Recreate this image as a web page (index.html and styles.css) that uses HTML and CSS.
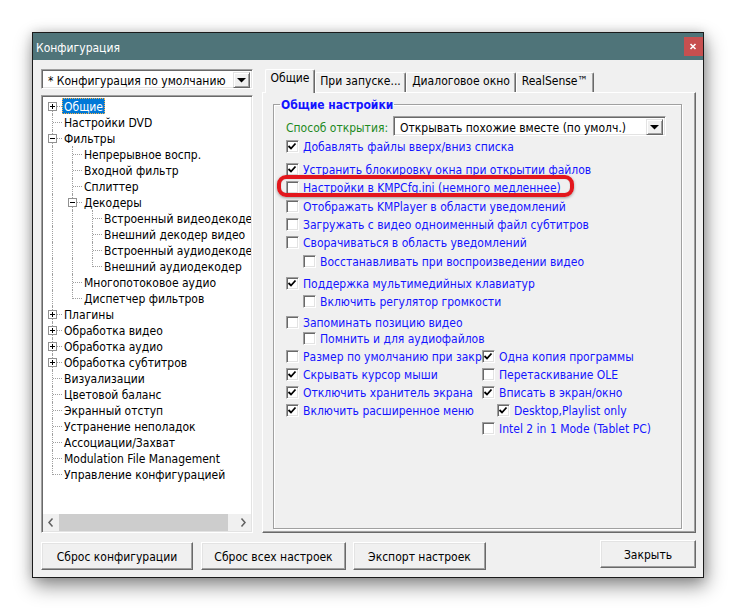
FILE: index.html
```html
<!DOCTYPE html>
<html lang="ru">
<head>
<meta charset="utf-8">
<title>Конфигурация</title>
<link rel="stylesheet" href="styles.css">
</head>
<body>
<div class="screen">
  <div class="window">
    <div class="titlebar">
      <span class="title">Конфигурация</span>
      <span class="close"><svg width="19" height="19" viewBox="0 0 19 19"><path d="M6.5 7 L11.5 12 M11.5 7 L6.5 12" stroke="#fff" stroke-width="1.6"/></svg></span>
    </div>
    <div class="body">
      <div class="main">
        <div class="left">
          <div class="combo cfg">
            <span class="combo-text">* Конфигурация по умолчанию</span>
            <span class="dd"><svg width="9" height="5" viewBox="0 0 9 5"><path d="M0 0 H9 L4.5 4.5 Z" fill="#000"/></svg></span>
          </div>
          <div class="tree">
            <div class="tree-rows">
              <div class="tr"><span class="c c0 ln-f"><svg class="exp" width="9" height="9" viewBox="0 0 9 9"><rect x="0.5" y="0.5" width="8" height="8" fill="#fff" stroke="#919191"/><path d="M2 4.5 H7 M4.5 2 V7" stroke="#000"/></svg></span><span class="lbl sel">Общие</span></div>
              <div class="tr"><span class="c c0 ln-t"></span><span class="lbl">Настройки DVD</span></div>
              <div class="tr"><span class="c c0 ln-t"><svg class="exp" width="9" height="9" viewBox="0 0 9 9"><rect x="0.5" y="0.5" width="8" height="8" fill="#fff" stroke="#919191"/><path d="M2 4.5 H7" stroke="#000"/></svg></span><span class="lbl">Фильтры</span></div>
              <div class="tr"><span class="c c0 ln-v"></span><span class="c ln-t"></span><span class="lbl">Непрерывное воспр.</span></div>
              <div class="tr"><span class="c c0 ln-v"></span><span class="c ln-t"></span><span class="lbl">Входной фильтр</span></div>
              <div class="tr"><span class="c c0 ln-v"></span><span class="c ln-t"></span><span class="lbl">Сплиттер</span></div>
              <div class="tr"><span class="c c0 ln-v"></span><span class="c ln-t"><svg class="exp" width="9" height="9" viewBox="0 0 9 9"><rect x="0.5" y="0.5" width="8" height="8" fill="#fff" stroke="#919191"/><path d="M2 4.5 H7" stroke="#000"/></svg></span><span class="lbl">Декодеры</span></div>
              <div class="tr"><span class="c c0 ln-v"></span><span class="c ln-v"></span><span class="c ln-t"></span><span class="lbl">Встроенный видеодекодер</span></div>
              <div class="tr"><span class="c c0 ln-v"></span><span class="c ln-v"></span><span class="c ln-t"></span><span class="lbl">Внешний декодер видео</span></div>
              <div class="tr"><span class="c c0 ln-v"></span><span class="c ln-v"></span><span class="c ln-t"></span><span class="lbl">Встроенный аудиодекодер</span></div>
              <div class="tr"><span class="c c0 ln-v"></span><span class="c ln-v"></span><span class="c ln-l"></span><span class="lbl">Внешний аудиодекодер</span></div>
              <div class="tr"><span class="c c0 ln-v"></span><span class="c ln-t"></span><span class="lbl">Многопотоковое аудио</span></div>
              <div class="tr"><span class="c c0 ln-v"></span><span class="c ln-l"></span><span class="lbl">Диспетчер фильтров</span></div>
              <div class="tr"><span class="c c0 ln-t"><svg class="exp" width="9" height="9" viewBox="0 0 9 9"><rect x="0.5" y="0.5" width="8" height="8" fill="#fff" stroke="#919191"/><path d="M2 4.5 H7 M4.5 2 V7" stroke="#000"/></svg></span><span class="lbl">Плагины</span></div>
              <div class="tr"><span class="c c0 ln-t"><svg class="exp" width="9" height="9" viewBox="0 0 9 9"><rect x="0.5" y="0.5" width="8" height="8" fill="#fff" stroke="#919191"/><path d="M2 4.5 H7 M4.5 2 V7" stroke="#000"/></svg></span><span class="lbl">Обработка видео</span></div>
              <div class="tr"><span class="c c0 ln-t"><svg class="exp" width="9" height="9" viewBox="0 0 9 9"><rect x="0.5" y="0.5" width="8" height="8" fill="#fff" stroke="#919191"/><path d="M2 4.5 H7 M4.5 2 V7" stroke="#000"/></svg></span><span class="lbl">Обработка аудио</span></div>
              <div class="tr"><span class="c c0 ln-t"><svg class="exp" width="9" height="9" viewBox="0 0 9 9"><rect x="0.5" y="0.5" width="8" height="8" fill="#fff" stroke="#919191"/><path d="M2 4.5 H7 M4.5 2 V7" stroke="#000"/></svg></span><span class="lbl">Обработка субтитров</span></div>
              <div class="tr"><span class="c c0 ln-t"></span><span class="lbl">Визуализации</span></div>
              <div class="tr"><span class="c c0 ln-t"></span><span class="lbl">Цветовой баланс</span></div>
              <div class="tr"><span class="c c0 ln-t"></span><span class="lbl">Экранный отступ</span></div>
              <div class="tr"><span class="c c0 ln-t"></span><span class="lbl">Устранение неполадок</span></div>
              <div class="tr"><span class="c c0 ln-t"></span><span class="lbl">Ассоциации/Захват</span></div>
              <div class="tr"><span class="c c0 ln-t"></span><span class="lbl">Modulation File Management</span></div>
              <div class="tr"><span class="c c0 ln-l"></span><span class="lbl">Управление конфигурацией</span></div>
            </div>
            <div class="hscroll">
              <span class="arrow"><svg width="16" height="17" viewBox="0 0 16 17"><path d="M9.5 4.5 L6 8.5 L9.5 12.5" fill="none" stroke="#606060" stroke-width="1.5"/></svg></span>
              <span class="thumb"></span>
              <span class="track"></span>
              <span class="arrow"><svg width="16" height="17" viewBox="0 0 16 17"><path d="M6.5 4.5 L10 8.5 L6.5 12.5" fill="none" stroke="#606060" stroke-width="1.5"/></svg></span>
            </div>
          </div>
        </div>
        <div class="right">
          <div class="tabs">
            <span class="tab active t1">Общие</span>
            <span class="tab t2">При запуске...</span>
            <span class="tab t3">Диалоговое окно</span>
            <span class="tab t4">RealSense™</span>
          </div>
          <div class="panel">
            <fieldset class="group">
              <legend class="legend">Общие настройки</legend>
              <div class="open-row">
                <span class="open-label">Способ открытия:</span>
                <div class="combo open">
                  <span class="combo-text">Открывать похожие вместе (по умолч.)</span>
                  <span class="dd"><svg width="9" height="5" viewBox="0 0 9 5"><path d="M0 0 H9 L4.5 4.5 Z" fill="#000"/></svg></span>
                </div>
              </div>
              <div class="row m2"><span class="cb"><svg class="ck" width="13" height="13" viewBox="0 0 13 13"><path d="M2.5 6 L5 8.5 L9.5 3.5" fill="none" stroke="#000" stroke-width="1.8"/></svg></span><span class="lab">Добавлять файлы вверх/вниз списка</span></div>
              <div class="row m7"><span class="cb"><svg class="ck" width="13" height="13" viewBox="0 0 13 13"><path d="M2.5 6 L5 8.5 L9.5 3.5" fill="none" stroke="#000" stroke-width="1.8"/></svg></span><span class="lab">Устранить блокировку окна при открытии файлов</span></div>
              <div class="row m2 hl-row"><span class="cb"></span><span class="lab">Настройки в KMPCfg.ini (немного медленнее)</span><span class="hl"></span></div>
              <div class="row m3"><span class="cb"></span><span class="lab">Отображать KMPlayer в области уведомлений</span></div>
              <div class="row m2"><span class="cb"></span><span class="lab">Загружать с видео одноименный файл субтитров</span></div>
              <div class="row m2"><span class="cb"></span><span class="lab">Сворачиваться в область уведомлений</span></div>
              <div class="row m3 sub"><span class="cb"></span><span class="lab">Восстанавливать при воспроизведении видео</span></div>
              <div class="row m6"><span class="cb"><svg class="ck" width="13" height="13" viewBox="0 0 13 13"><path d="M2.5 6 L5 8.5 L9.5 3.5" fill="none" stroke="#000" stroke-width="1.8"/></svg></span><span class="lab">Поддержка мультимедийных клавиатур</span></div>
              <div class="row m2 sub"><span class="cb"></span><span class="lab">Включить регулятор громкости</span></div>
              <div class="row m5"><span class="cb"></span><span class="lab">Запоминать позицию видео</span></div>
              <div class="row m0 sub"><span class="cb"></span><span class="lab">Помнить и для аудиофайлов</span></div>
              <div class="grid">
                <div class="row cell-l"><span class="cb"></span><span class="lab">Размер по умолчанию при закрытии</span></div>
                <div class="row"><span class="cb"><svg class="ck" width="13" height="13" viewBox="0 0 13 13"><path d="M2.5 6 L5 8.5 L9.5 3.5" fill="none" stroke="#000" stroke-width="1.8"/></svg></span><span class="lab">Одна копия программы</span></div>
                <div class="row cell-l"><span class="cb"><svg class="ck" width="13" height="13" viewBox="0 0 13 13"><path d="M2.5 6 L5 8.5 L9.5 3.5" fill="none" stroke="#000" stroke-width="1.8"/></svg></span><span class="lab">Скрывать курсор мыши</span></div>
                <div class="row"><span class="cb"></span><span class="lab">Перетаскивание OLE</span></div>
                <div class="row cell-l"><span class="cb"><svg class="ck" width="13" height="13" viewBox="0 0 13 13"><path d="M2.5 6 L5 8.5 L9.5 3.5" fill="none" stroke="#000" stroke-width="1.8"/></svg></span><span class="lab">Отключить хранитель экрана</span></div>
                <div class="row"><span class="cb"><svg class="ck" width="13" height="13" viewBox="0 0 13 13"><path d="M2.5 6 L5 8.5 L9.5 3.5" fill="none" stroke="#000" stroke-width="1.8"/></svg></span><span class="lab">Вписать в экран/окно</span></div>
                <div class="row cell-l"><span class="cb"><svg class="ck" width="13" height="13" viewBox="0 0 13 13"><path d="M2.5 6 L5 8.5 L9.5 3.5" fill="none" stroke="#000" stroke-width="1.8"/></svg></span><span class="lab">Включить расширенное меню</span></div>
                <div class="row sub2"><span class="cb"><svg class="ck" width="13" height="13" viewBox="0 0 13 13"><path d="M2.5 6 L5 8.5 L9.5 3.5" fill="none" stroke="#000" stroke-width="1.8"/></svg></span><span class="lab">Desktop,Playlist only</span></div>
                <div class="row cell-l"></div>
                <div class="row"><span class="cb"></span><span class="lab">Intel 2 in 1 Mode (Tablet PC)</span></div>
              </div>
            </fieldset>
          </div>
        </div>
      </div>
      <div class="buttons">
        <span class="btn b1">Сброс конфигурации</span>
        <span class="btn b2">Сброс всех настроек</span>
        <span class="btn b3">Экспорт настроек</span>
        <span class="btn b4">Закрыть</span>
      </div>
    </div>
  </div>
</div>
</body>
</html>
```

FILE: styles.css
```css
* { box-sizing: border-box; }
html, body { margin: 0; padding: 0; background: #ffffff; }
body {
  font-family: "DejaVu Sans Condensed", "DejaVu Sans", sans-serif;
  font-stretch: condensed;
  font-size: 12px;
  color: #000;
}
.screen { padding: 32px 0 0 32px; width: 736px; height: 610px; overflow: hidden; }
.window {
  width: 672px;
  height: 546px;
  border: 1px solid #1b1b1b;
  background: #f0f0f0;
  display: flex;
  flex-direction: column;
  box-shadow: 2px 8px 18px rgba(0,0,0,0.45), 0 0 10px rgba(0,0,0,0.15);
}
.titlebar {
  height: 27px;
  flex: none;
  background: #4f7479;
  display: flex;
  align-items: flex-start;
}
.title {
  color: #fff;
  font-size: 12px;
  line-height: 25px;
  padding-top: 3px;
  padding-left: 3px;
  flex: 1;
}
.close {
  width: 19px; height: 19px; margin-top: 4px;
  background: #c75050;
  display: flex;
}
.body {
  flex: 1;
  display: flex;
  flex-direction: column;
  padding: 8px 7px 7px 8px;
}
.main { flex: 1; display: flex; gap: 9px; min-height: 0; }
.left { width: 212px; flex: none; display: flex; flex-direction: column; }
.right { flex: 1; display: flex; flex-direction: column; }

/* combo box */
.combo {
  height: 20px;
  background: #fff;
  border: 1px solid;
  border-color: #a0a0a0 #fff #fff #a0a0a0;
  box-shadow: inset 1px 1px #696969, inset -1px -1px #e3e3e3;
  display: flex;
  align-items: flex-start;
  padding: 1px 2px 1px 2px;
}
.cfg { margin-top: 1px; }
.combo-text { flex: 1; padding: 2px 0 0 4px; white-space: nowrap; overflow: hidden; line-height: 16px; height: 18px; }
.dd {
  width: 17px; height: 16px; flex: none;
  margin-top: 1px;
  background: #f0f0f0;
  border: 1px solid;
  border-color: #e3e3e3 #696969 #696969 #e3e3e3;
  box-shadow: inset 1px 1px #fff, inset -1px -1px #a0a0a0;
  display: flex; align-items: center; justify-content: center;
}

/* tree */
.tree {
  flex: 1;
  margin-top: 6px;
  background: #fff;
  border: 1px solid;
  border-color: #a0a0a0 #fff #fff #a0a0a0;
  box-shadow: inset 1px 1px #696969, inset -1px -1px #e3e3e3;
  padding: 2px 1px 1px 1px;
  display: flex;
  flex-direction: column;
}
.tree-rows { flex: 1; overflow: hidden; }
.tr { height: 16px; display: flex; white-space: nowrap; }
.c { position: relative; width: 20px; height: 16px; flex: none; }
.c0 { width: 19px; }
.c::before, .c::after { content: ""; position: absolute; }
.ln-v::before, .ln-t::before { left: 10px; top: 0; height: 16px; border-left: 1px dotted #a0a0a0; }
.ln-l::before { left: 10px; top: 0; height: 9px; border-left: 1px dotted #a0a0a0; }
.ln-f::before { left: 10px; top: 8px; height: 8px; border-left: 1px dotted #a0a0a0; }
.c0::before { left: 9px; }
.ln-t::after, .ln-l::after, .ln-f::after { left: 11px; right: 0; top: 8px; border-top: 1px dotted #a0a0a0; }
.c0::after { left: 10px; }
.exp { position: absolute; left: 6px; top: 4px; z-index: 1; }
.c0 .exp { left: 5px; }
.lbl { line-height: 16px; height: 16px; padding: 1px 2px 0 2px; }
.sel { background: #0078d7; color: #fff; outline: 1px dotted #f7b24a; outline-offset: -1px; }
.hscroll { height: 17px; flex: none; background: #f0f0f0; display: flex; }
.arrow { width: 16px; flex: none; display: flex; }
.thumb { width: 169px; background: #cdcdcd; flex: none; }
.track { flex: 1; }

/* tabs */
.tabs { height: 23px; margin-top: 1px; display: flex; align-items: flex-end; position: relative; z-index: 1; padding-left: 3px; }
.tab {
  height: 20px;
  line-height: 17px;
  text-align: center;
  background: #f0f0f0;
  border: 1px solid;
  border-bottom: none;
  border-color: #fff #696969 #696969 #fff;
  border-radius: 2px 2px 0 0;
  box-shadow: inset -1px 0 #a0a0a0;
  white-space: nowrap;
}
.tab.active { height: 24px; margin-bottom: -1px; position: relative; z-index: 2; }
.t1 { width: 50px; }
.t2 { width: 91px; }
.t3 { width: 110px; }
.t4 { width: 78px; }
.panel {
  flex: 1;
  border: 1px solid;
  border-color: #fff #696969 #696969 #fff;
  box-shadow: inset -1px -1px #a0a0a0;
  padding: 3px 13px 3px 10px;
  display: flex;
}
.group {
  flex: 1;
  margin: 0;
  border: 1px solid #a0a0a0;
  box-shadow: 1px 1px #fff, inset 1px 1px #fff;
  padding: 0 0 0 12px;
  min-width: 0;
}
.legend {
  color: #1414ff;
  font-weight: bold;
  line-height: 16px;
  padding: 1px 1px 0 1px;
  margin-left: -6px;
}
.open-row { display: flex; align-items: flex-start; margin-top: 3px; height: 20px; }
.open-label { color: #1e8a1e; width: 107px; flex: none; line-height: 20px; padding-top: 2px; }
.open { width: 273px; }
.row { display: flex; align-items: center; height: 16px; gap: 4px; white-space: nowrap; position: relative; }
.m0 { margin-top: 0; }
.m2 { margin-top: 2px; }
.m3 { margin-top: 3px; }
.m5 { margin-top: 5px; }
.m6 { margin-top: 6px; }
.m7 { margin-top: 7px; }
.sub { margin-left: 17px; }
.sub2 { margin-left: 15px; }
.cb {
  width: 13px; height: 13px; flex: none;
  background: #fff;
  border: 1px solid;
  border-color: #a0a0a0 #fff #fff #a0a0a0;
  box-shadow: inset 1px 1px #696969, inset -1px -1px #e3e3e3;
  position: relative;
}
.ck { position: absolute; left: -1px; top: -1px; }
.lab { color: #1414ff; line-height: 16px; padding-top: 2px; }
.grid { display: grid; grid-template-columns: 196px 1fr; row-gap: 2px; margin-top: 2px; }
.cell-l { overflow: hidden; }
.hl {
  position: absolute;
  left: -9px; top: -4px;
  width: 297px; height: 22px;
  border: 4px solid #e3171d;
  border-radius: 9px;
  box-shadow: 0 1px 3px rgba(0,0,0,0.35), inset 0 0 1px rgba(0,0,0,0.35);
}

/* buttons */
.buttons { display: flex; align-items: flex-start; margin-top: 9px; height: 28px; flex: none; }
.btn {
  height: 28px;
  line-height: 24px;
  padding-top: 2px;
  text-align: center;
  background: #f0f0f0;
  border: 1px solid;
  border-color: #fff #696969 #696969 #fff;
  box-shadow: inset -1px -1px #a0a0a0, inset 1px 1px #e3e3e3;
  white-space: nowrap;
}
.b1 { width: 152px; }
.b2 { width: 145px; margin-left: 8px; }
.b3 { width: 133px; margin-left: 7px; }
.b4 { width: 96px; margin-left: auto; margin-top: -2px; }
```
